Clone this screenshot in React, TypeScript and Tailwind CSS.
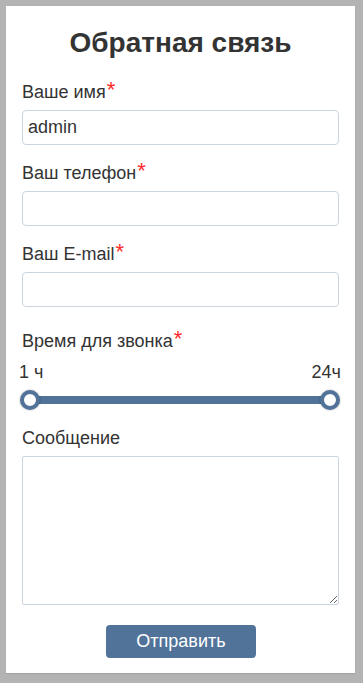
import { useState } from 'react';

const font = { fontFamily: '"Liberation Sans", Arial, sans-serif' };

function Star() {
  return <span className="text-[#ff2b2b] text-[22px] leading-none align-top relative -top-[2px] ml-[1px]">*</span>;
}

function Label({ text, required }: { text: string; required?: boolean }) {
  return (
    <label className="block text-[18px] leading-[22px] text-[#333] mb-[7px]">
      {text}
      {required && <Star />}
    </label>
  );
}

const inputCls =
  'block w-full h-[35px] border border-[#ccd5de] rounded-[4px] px-[5px] text-[18px] text-[#333] outline-none';

export default function App() {
  const [name, setName] = useState('admin');

  return (
    <div className="min-h-[683px] bg-[#b3b3b3] pt-[6px] pl-[6px] pr-[8px] pb-[10px]" style={font}>
      <div className="bg-white h-[667px] px-[16px] pt-[21px] pb-[15px] shadow-[0_1px_1px_rgba(0,0,0,0.08)]">
        <h1 className="text-center text-[28px] leading-[32px] font-bold text-[#333] mb-[22px]">Обратная связь</h1>

        <Label text="Ваше имя" required />
        <input value={name} onChange={(e) => setName(e.target.value)} className={inputCls} />

        <div className="mt-[17px]">
          <Label text="Ваш телефон" required />
          <input className={inputCls} />
        </div>

        <div className="mt-[17px]">
          <Label text="Ваш E-mail" required />
          <input className={inputCls} />
        </div>

        <div className="mt-[23px]">
          <label className="block text-[18px] leading-[22px] text-[#333]">
            Время для звонка
            <Star />
          </label>
          <div className="flex justify-between text-[18px] leading-[22px] text-[#333] mt-[9px] -ml-[3px] -mr-[2px]">
            <span>1 ч</span>
            <span>24ч</span>
          </div>
          <div className="relative h-[20px] mt-[7px] -ml-[2px] -mr-[1px]">
            <div className="absolute left-[10px] right-[10px] top-[6px] h-[8px] bg-[#517399]" />
            <div className="absolute left-0 top-0 w-[20px] h-[20px] rounded-full bg-white border-[4px] border-[#517399] shadow-[0_0_2px_rgba(0,0,0,0.35)]" />
            <div className="absolute right-0 top-0 w-[20px] h-[20px] rounded-full bg-white border-[4px] border-[#517399] shadow-[0_0_2px_rgba(0,0,0,0.35)]" />
          </div>
        </div>

        <div className="mt-[17px]">
          <Label text="Сообщение" />
          <textarea className="block w-full h-[149px] border border-[#ccd5de] rounded-[2px] px-[5px] text-[18px] text-[#333] outline-none" />
        </div>

        <div className="flex justify-center mt-[20px] pl-[1px]">
          <button className="w-[150px] h-[33px] bg-[#517399] text-white text-[18px] rounded-[4px]">Отправить</button>
        </div>
      </div>
    </div>
  );
}
